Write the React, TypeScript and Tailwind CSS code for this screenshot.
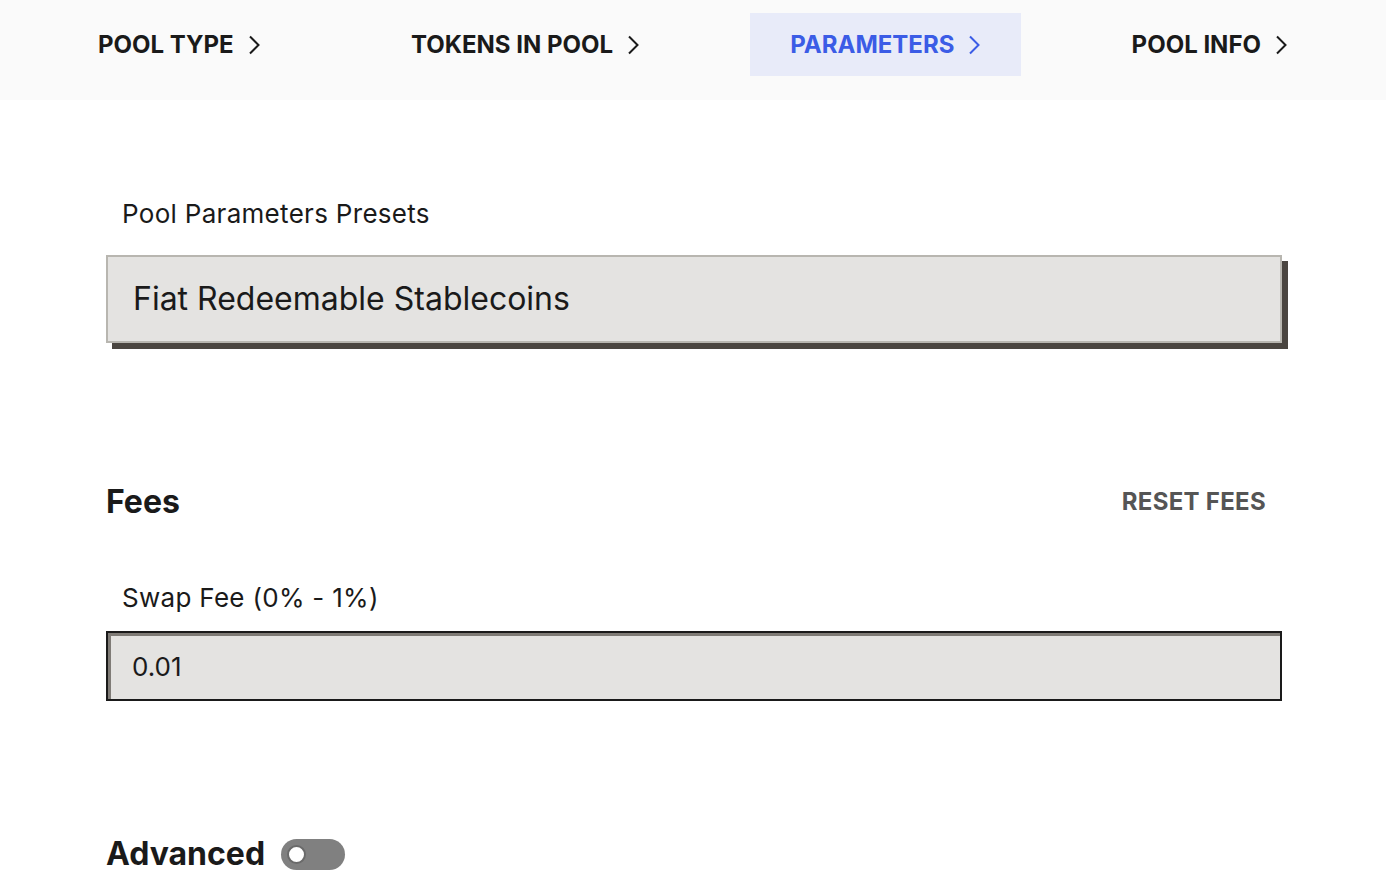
const STEPS = [
  { label: 'POOL TYPE', active: false },
  { label: 'TOKENS IN POOL', active: false },
  { label: 'PARAMETERS', active: true },
  { label: 'POOL INFO', active: false },
]

function Chevron() {
  return (
    <svg width="13" height="20" viewBox="0 0 13 20" fill="none" className="shrink-0">
      <path d="M2 1.5 L10.5 10 L2 18.5" stroke="currentColor" strokeWidth="2" />
    </svg>
  )
}

function StepTab({ label, active }: { label: string; active: boolean }) {
  return (
    <div
      className={`flex h-[63px] items-center gap-[14px] px-10 text-[24px] font-bold ${
        active ? 'bg-[#e8ebf9] text-[#3b5ce6]' : 'text-[#1a1a1a]'
      }`}
    >
      <span>{label}</span>
      <Chevron />
    </div>
  )
}

export default function App() {
  return (
    <div className="min-h-screen bg-white text-[#1a1a1a]" style={{ fontFamily: 'Inter, "Noto Sans", sans-serif' }}>
      <nav className="flex h-[100px] items-start justify-between bg-[#fafafa] px-[58px] pt-[13px]">
        {STEPS.map((s) => (
          <StepTab key={s.label} {...s} />
        ))}
      </nav>

      <main className="ml-[106px] mr-[104px] pb-10">
        <label className="mt-[98px] block pl-4 text-[26px] leading-8 tracking-[0.3px]">Pool Parameters Presets</label>
        <div className="mt-[25px] flex h-[88px] items-center border-2 border-[#b8b6b0] bg-[#e4e3e1] pl-[25px] text-[32px] shadow-[6px_6px_0_#4a4540]">
          Fiat Redeemable Stablecoins
        </div>

        <div className="mt-[141px] flex h-9 items-center justify-between">
          <h2 className="text-[32px] font-bold leading-9">Fees</h2>
          <button className="pr-4 text-[24px] font-bold tracking-[0.3px] text-[#555]">RESET FEES</button>
        </div>

        <label className="mt-[62px] block pl-4 text-[26px] leading-8 tracking-[0.3px]">Swap Fee (0% - 1%)</label>
        <div className="mt-[17px] flex h-[70px] items-center border-2 border-[#1a1a1a] bg-[#e4e3e1] pl-6 text-[26px] shadow-[inset_3px_3px_0_#7f7b76]">
          0.01
        </div>

        <div className="mt-[135px] flex h-9 items-center gap-4">
          <h2 className="text-[32px] font-bold leading-9">Advanced</h2>
          <div className="flex h-[31px] w-16 items-center rounded-full bg-[#808080] px-[6px]">
            <span className="h-[19px] w-[19px] rounded-full border-2 border-[#6a6a6a] bg-white" />
          </div>
        </div>
      </main>
    </div>
  )
}
